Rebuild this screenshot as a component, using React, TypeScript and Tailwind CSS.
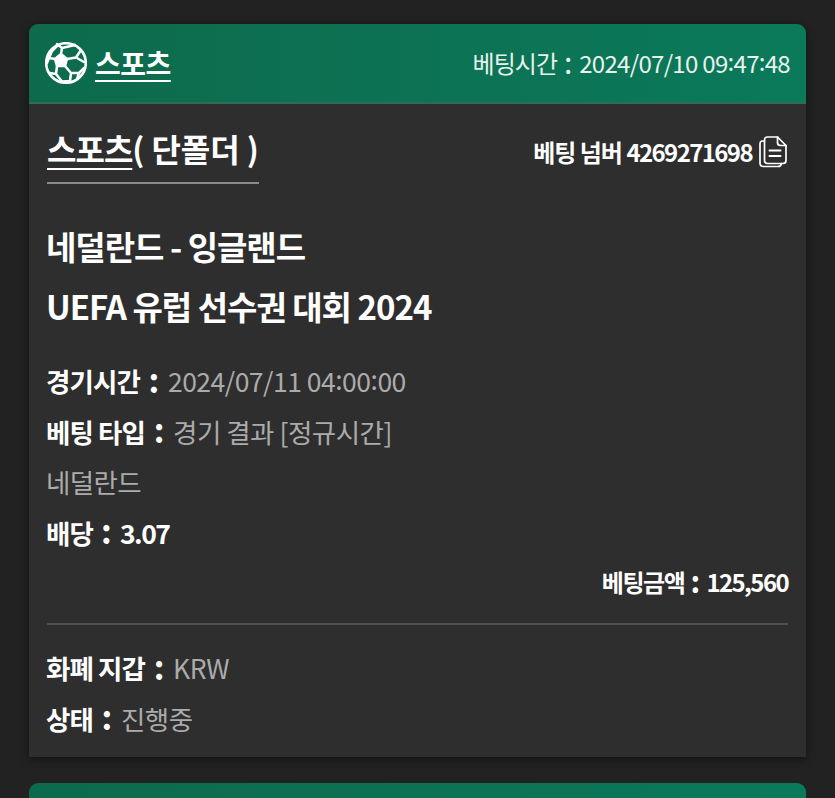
import { Fragment } from "react";

const cjk = "font-['Noto_Sans_CJK_KR','Noto_Sans',sans-serif]";

function Ball() {
  return (
    <svg width="42" height="42" viewBox="0 0 42 42" fill="none">
      <circle cx="21" cy="21" r="19.8" fill="#0d6b4e" stroke="#fff" strokeWidth="2.6" />
      <g stroke="#fff" strokeWidth="2.5" strokeLinejoin="round" strokeLinecap="round">
        <path d="M16 12 L22 17 L20 24 L12 24 L10 17 Z" fill="#fff" />
        <path d="M16 12 L17 6 L12 2 M17 6 L30 3" />
        <path d="M22 17 L31 15.5 L36 8 M31 15.5 L39 20" />
        <path d="M20 24 L26 31 L34 31 L39 26 M26 31 L25 39 L17 39.5" />
        <path d="M12 24 L11 32 L5 31 M11 32 L17 39.5" />
        <path d="M10 17 L4 16 L7 9 L12 4 M4 16 L2 21" />
        <path d="M34 31 L32 37" />
      </g>
    </svg>
  );
}

function CopyIcon() {
  return (
    <svg width="28" height="32" viewBox="0 0 28 32" fill="none" stroke="#fff" strokeWidth="1.7" strokeLinejoin="round" strokeLinecap="round">
      <path d="M5.5 5 H3.5 Q1 5 1 8 V27 Q1 30.5 4.5 30.5 H19 Q22 30.5 22.5 27.5" />
      <path d="M5.5 4 Q5.5 1 8.5 1 H18.5 L27 9.5 V24.5 Q27 27.5 24 27.5 H8.5 Q5.5 27.5 5.5 24.5 Z" />
      <path d="M18.5 1 V6.5 Q18.5 9.5 21.5 9.5 H27" />
      <path d="M10.5 14.5 H21.5 M10.5 20 H21.5" strokeWidth="2" />
    </svg>
  );
}

function Time({ text }: { text: string }) {
  const parts = text.split(":");
  return (
    <>
      {parts.map((p, i) => (
        <Fragment key={i}>
          {i > 0 && <span className="relative -top-[2px]">:</span>}
          {p}
        </Fragment>
      ))}
    </>
  );
}

function Colon({ w, size }: { w: string; size: string }) {
  return <span className={`${w} ${size} -translate-y-[2px] text-center font-bold leading-none text-white`}>:</span>;
}

function Row({ label, value }: { label: string; value: string }) {
  return (
    <div className="-ml-px flex h-[50.5px] items-center text-[26.5px]">
      <span className="font-bold tracking-[-0.9px] text-white">{label}</span>
      <Colon w="w-[28px]" size="text-[33px]" />
      <span className="font-normal tracking-[-0.5px] text-[#ababab]">
        <Time text={value} />
      </span>
    </div>
  );
}

export default function App() {
  return (
    <div className={`h-[798px] overflow-hidden bg-[#222222] px-[29px] pt-[24px] ${cjk}`}>
      <div className="rounded-t-[9px] bg-[#2e2e2e] shadow-[0_2px_8px_rgba(0,0,0,0.5)]">
        <div className="flex h-[80px] items-center justify-between rounded-t-[9px] border-b-2 border-[#2f6a5a] bg-gradient-to-r from-[#0d6a4c] to-[#0a7a5a] pl-[16px] pr-[16px]">
          <div className="flex items-center gap-[8px]">
            <Ball />
            <span className="text-[28px] font-bold tracking-[-0.5px] text-white underline decoration-2 underline-offset-[5px]">스포츠</span>
          </div>
          <div className="-mt-px flex items-center text-[24px] text-[#e8f2ee]">
            <span className="tracking-[-0.9px]">베팅시간</span>
            <Colon w="w-[22px]" size="text-[30px] !font-normal !text-[#e8f2ee]" />
            <span className="tracking-[-0.7px]"><Time text="2024/07/10 09:47:48" /></span>
          </div>
        </div>
        <div className="px-[18px] pb-[13px]">
          <div className="flex items-center justify-between pt-[18px]">
            <div className="border-b-2 border-[#8a8a8a] pb-[8px]">
              <div className="h-[52px] text-[32px] font-bold leading-[52px] text-white">
                <span className="tracking-[-1px] underline decoration-2 underline-offset-[6px]">스포츠</span>
                <span className="tracking-[-0.1px]">( 단폴더 )</span>
              </div>
            </div>
            <div className="-mt-[2px] mr-px flex items-center gap-[7px] text-[24px] font-bold text-white">
              <span>
                <span className="tracking-[-1px]">베팅 넘버 </span>
                <span className="tracking-[-1.6px]">4269271698</span>
              </span>
              <CopyIcon />
            </div>
          </div>
          <div className="-ml-px mt-[32px] text-[33px] font-bold leading-[60px] tracking-[-1px] text-white">
            <div>네덜란드 - 잉글랜드</div>
            <div>UEFA 유럽 선수권 대회 2024</div>
          </div>
          <div className="mt-[20px]">
            <Row label="경기시간" value="2024/07/11 04:00:00" />
            <Row label="베팅 타입" value="경기 결과 [정규시간]" />
            <div className="-ml-px flex h-[50.5px] items-center text-[26.5px] tracking-[-0.6px] text-[#ababab]">네덜란드</div>
            <div className="-ml-px flex h-[50.5px] items-center text-[26.5px] font-bold text-white">
              <span className="tracking-[-0.9px]">배당</span>
              <Colon w="w-[27px]" size="text-[33px]" />
              <span className="tracking-[-1.5px]">3.07</span>
            </div>
          </div>
          <div className="flex items-center justify-end text-[24px] font-bold leading-[48px] text-white">
            <span className="tracking-[-1.4px]">베팅금액</span>
            <Colon w="w-[22px]" size="text-[30px]" />
            <span className="tracking-[-1.6px]">125,560</span>
          </div>
          <div className="mt-[17px] h-[2px] bg-[#505050]" />
          <div className="mt-[18px]">
            <Row label="화폐 지갑" value="KRW" />
            <Row label="상태" value="진행중" />
          </div>
        </div>
      </div>
      <div className="mt-[26px] h-[40px] rounded-t-[9px] bg-gradient-to-r from-[#0d6a4c] to-[#0a7a5a]" />
    </div>
  );
}
